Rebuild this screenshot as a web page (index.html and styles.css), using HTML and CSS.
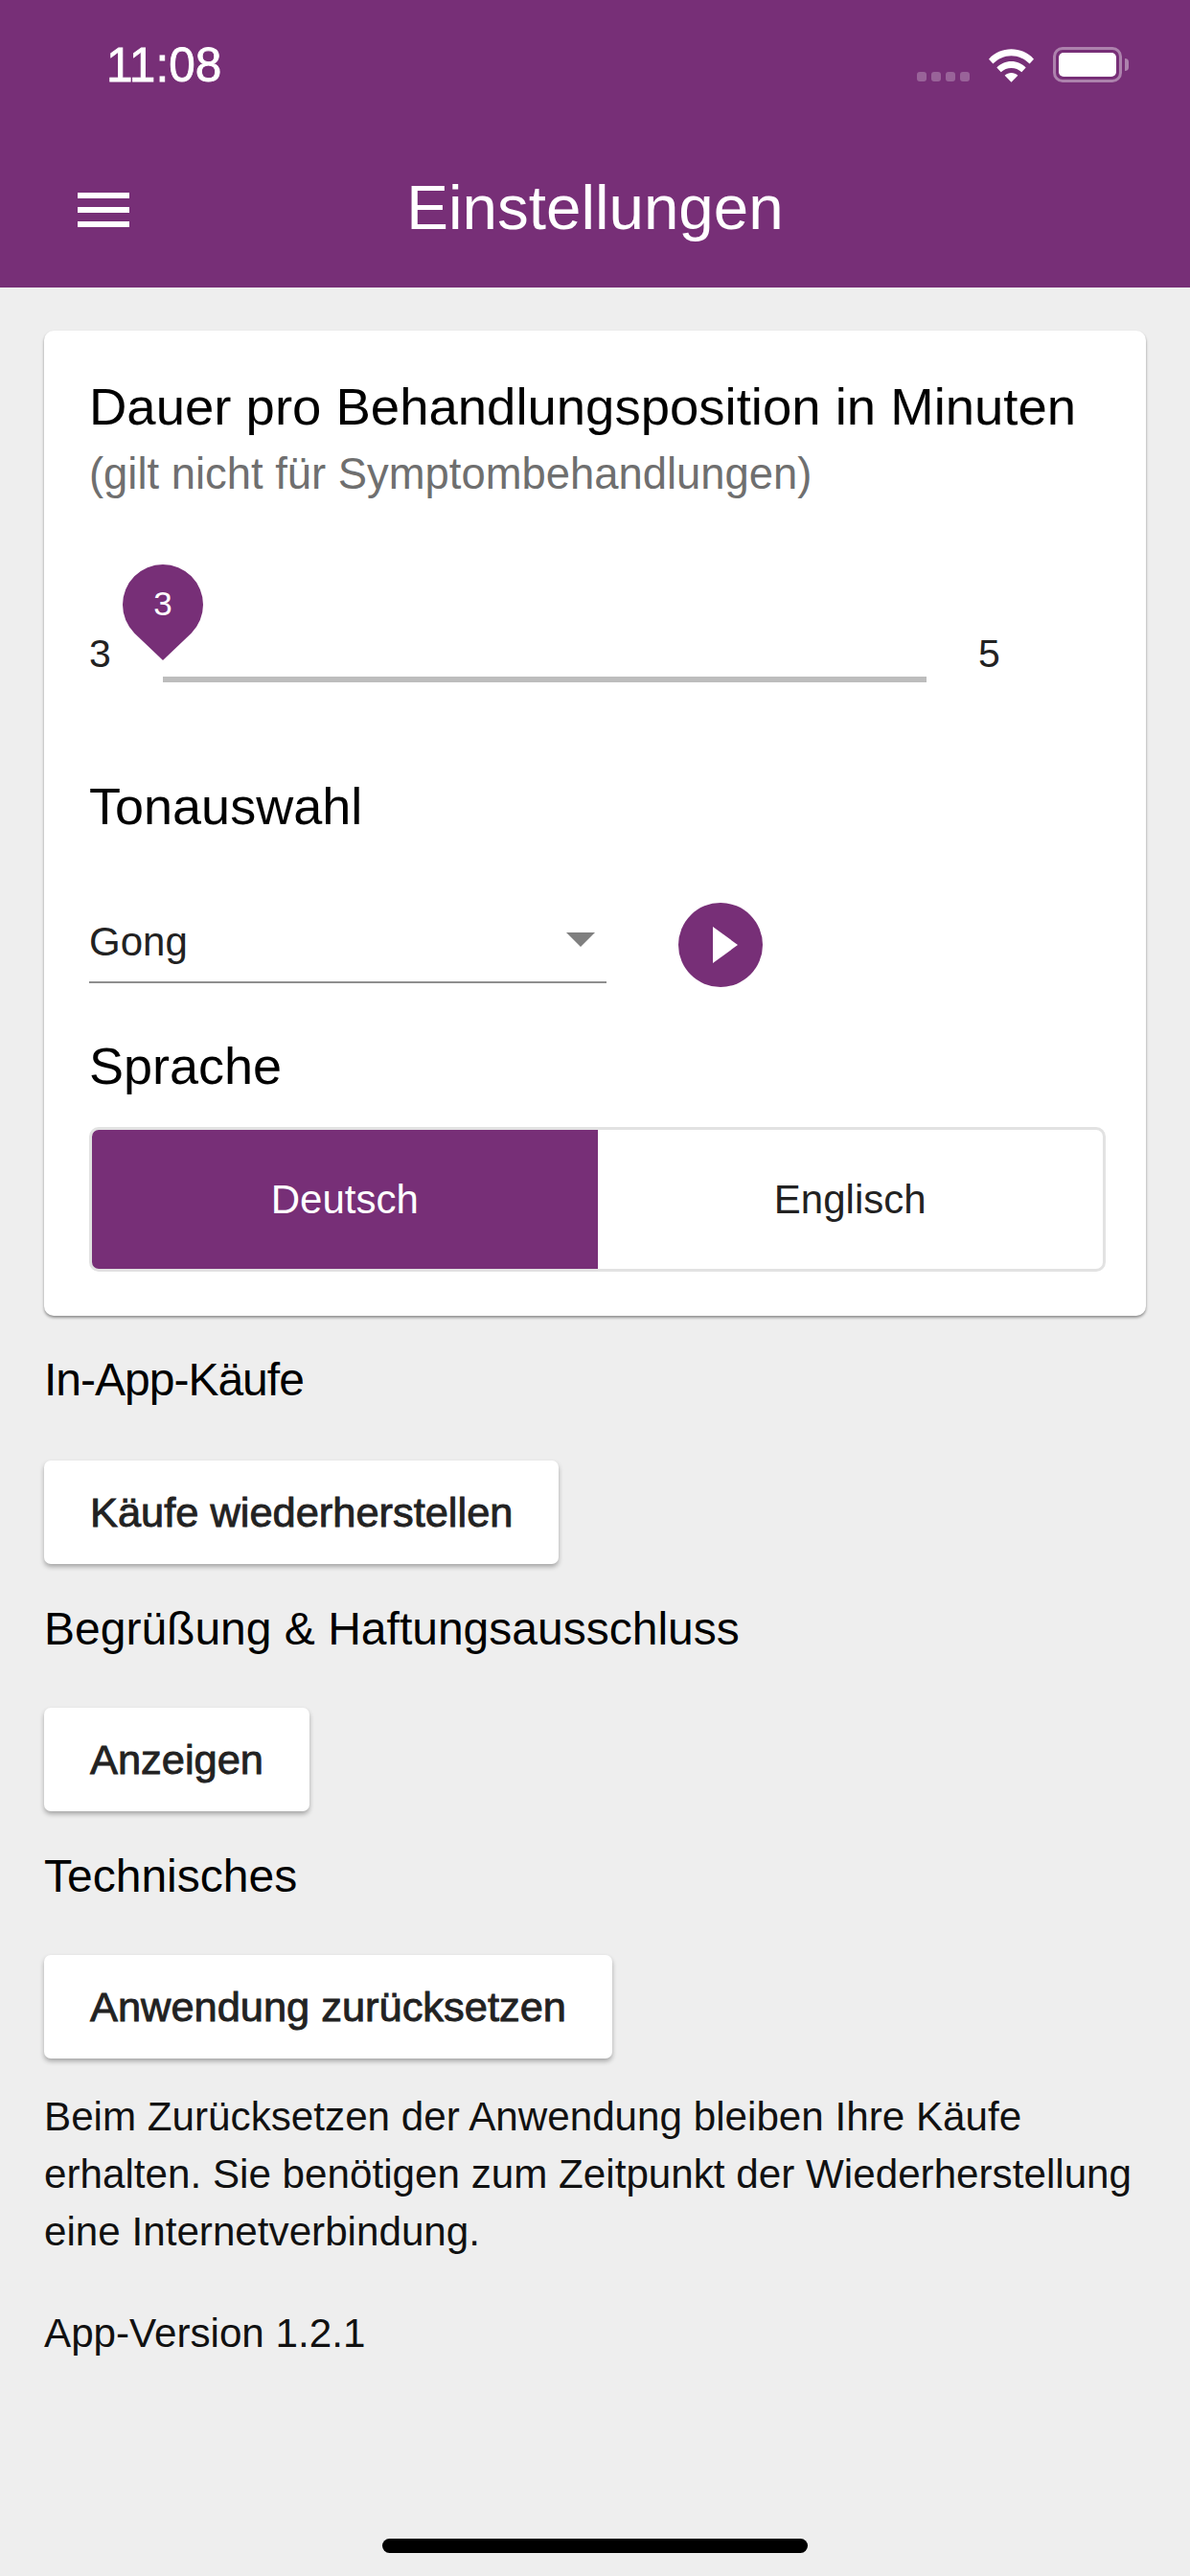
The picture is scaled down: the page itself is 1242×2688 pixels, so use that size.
FILE: index.html
```html
<!DOCTYPE html>
<html lang="de">
<head>
    <meta charset="UTF-8">
    <meta name="viewport" content="width=device-width, initial-scale=1.0">
    <title>Einstellungen</title>
    <link rel="stylesheet" href="styles.css">
</head>
<body>

    <header class="app-header">
        <div class="status-bar">
            <span class="status-time">11:08</span>
            <div class="status-icons">
                <div class="signal-dots"><i></i><i></i><i></i><i></i></div>
                <svg class="wifi-icon" width="47" height="36" viewBox="0 0 48 36">
                    <path fill="#fff" d="M0 11.500C6.500 4.500 15 1 24 1s17.500 3.500 24 10.500l-4.500 5C38 11 31.500 8 24 8S10 11 4.500 16.500z"/>
                    <path fill="#fff" d="M8.500 20.500C12.500 16.500 18 14 24 14s11.500 2.500 15.500 6.500L35 25.500C32 22.500 28 21 24 21s-8 1.500-11 4.500z"/>
                    <path fill="#fff" d="M17 29c2-1.800 4.500-2.800 7-2.800s5 1 7 2.800l-7 7z"/>
                </svg>
                <div class="battery">
                    <div class="battery-body"><div class="battery-level"></div></div>
                    <div class="battery-cap"></div>
                </div>
            </div>
        </div>
        <div class="toolbar">
            <button class="menu-button" aria-label="Menü"><i></i><i></i><i></i></button>
            <h1>Einstellungen</h1>
        </div>
    </header>

    <main class="content">
        <section class="card">
            <h2 class="card-title">Dauer pro Behandlungsposition in Minuten</h2>
            <p class="card-note">(gilt nicht für Symptombehandlungen)</p>

            <div class="slider">
                <span class="slider-label">3</span>
                <div class="slider-track">
                    <div class="slider-pin">
                        <svg width="84" height="100" viewBox="0 0 84 100">
                            <path fill="#772f77" d="M42 100 12.300 71.700A42 42 0 1 1 71.700 71.700z"/>
                        </svg>
                        <span>3</span>
                    </div>
                </div>
                <span class="slider-label">5</span>
            </div>

            <h2 class="section-title">Tonauswahl</h2>
            <div class="sound-row">
                <div class="select">
                    <span>Gong</span>
                    <i class="select-arrow"></i>
                </div>
                <button class="play-button" aria-label="Abspielen"><i></i></button>
            </div>

            <h2 class="section-title language-title">Sprache</h2>
            <div class="segment">
                <div class="segment-item active">Deutsch</div>
                <div class="segment-item">Englisch</div>
            </div>
        </section>

        <p class="label label-tight">In-App-Käufe</p>
        <button class="raised-button">Käufe wiederherstellen</button>

        <p class="label">Begrüßung &amp; Haftungsausschluss</p>
        <button class="raised-button">Anzeigen</button>

        <p class="label">Technisches</p>
        <button class="raised-button">Anwendung zurücksetzen</button>

        <p class="hint">Beim Zurücksetzen der Anwendung bleiben Ihre Käufe erhalten. Sie benötigen zum Zeitpunkt der Wiederherstellung eine Internetverbindung.</p>
        <p class="version">App-Version 1.2.1</p>
    </main>

    <div class="home-bar"></div>

</body>
</html>
```

FILE: styles.css
```css
* {
    box-sizing: border-box;
}

body {
    margin: 0;
    height: 2688px;
    position: relative;
    overflow: hidden;
    background-color: #eeeeee;
    color: #000;
    font-family: "Liberation Sans", Arial, sans-serif;
}

h1, h2, p {
    margin: 0;
    font-weight: 400;
}

button {
    font-family: inherit;
    border: none;
    padding: 0;
}

/* header */
.app-header {
    height: 300px;
    background-color: #772f77;
    color: #fff;
}

.status-bar {
    height: 130px;
    padding: 44px 64px 0 111px;
    display: flex;
    justify-content: space-between;
    align-items: flex-start;
}

.status-time {
    font-size: 49.5px;
    line-height: 48px;
    -webkit-text-stroke: 0.8px #fff;
}

.status-icons {
    display: flex;
    align-items: flex-end;
    gap: 20px;
    margin-top: 5px;
}

.signal-dots {
    display: flex;
    gap: 5px;
    margin-bottom: 1px;
}

.signal-dots i {
    width: 10px;
    height: 10px;
    border-radius: 3px;
    background-color: rgba(255, 255, 255, 0.25);
}

.wifi-icon {
    display: block;
}

.battery {
    display: flex;
    align-items: center;
    gap: 3px;
}

.battery-body {
    width: 72px;
    height: 37px;
    border: 3px solid rgba(255, 255, 255, 0.4);
    border-radius: 10px;
    padding: 3px;
}

.battery-level {
    height: 100%;
    border-radius: 5px;
    background-color: #fff;
}

.battery-cap {
    width: 4px;
    height: 13px;
    border-radius: 0 4px 4px 0;
    background-color: rgba(255, 255, 255, 0.4);
}

.toolbar {
    height: 170px;
    padding-top: 4px;
    position: relative;
    display: flex;
    align-items: center;
    justify-content: center;
}

.toolbar h1 {
    font-size: 65.5px;
    line-height: 74px;
}

.menu-button {
    position: absolute;
    left: 81px;
    top: 71px;
    width: 54px;
    display: flex;
    flex-direction: column;
    gap: 9px;
    background: none;
}

.menu-button i {
    display: block;
    height: 6px;
    background-color: #fff;
}

/* main */
.content {
    padding: 45px 46px 0;
}

.card {
    width: 1150px;
    height: 1028px;
    padding: 50px 42px 0 47px;
    background-color: #fff;
    border-radius: 10px;
    box-shadow: 0 2px 3px rgba(0, 0, 0, 0.4);
}

.card-title {
    font-size: 54.5px;
    line-height: 60px;
}

.card-note {
    margin-top: 14px;
    font-size: 45.4px;
    line-height: 52px;
    color: #6f6f6f;
}

.slider {
    display: flex;
    align-items: flex-start;
    margin-top: 138px;
    height: 90px;
}

.slider-label {
    font-size: 41px;
    line-height: 46px;
    width: 77px;
    color: #222;
}

.slider-track {
    width: 797px;
    height: 6px;
    margin-top: 47px;
    background-color: #bdbdbd;
    position: relative;
}

.slider-track + .slider-label {
    margin-left: 54px;
}

.slider-pin {
    position: absolute;
    left: -42px;
    top: -117px;
    width: 84px;
    height: 100px;
}

.slider-pin svg {
    display: block;
}

.slider-pin span {
    position: absolute;
    left: 0;
    right: 0;
    top: 20px;
    text-align: center;
    color: #fff;
    font-size: 35px;
    line-height: 42px;
}

.section-title {
    font-size: 54px;
    line-height: 60px;
}

.card > .slider + .section-title {
    margin-top: 62px;
}

.sound-row {
    display: flex;
    align-items: flex-start;
    margin-top: 71px;
}

.select {
    width: 540px;
    height: 84px;
    display: flex;
    justify-content: space-between;
    align-items: center;
    border-bottom: 2px solid #8f8f8f;
    font-size: 42px;
    color: #222;
    padding-right: 12px;
}

.select-arrow {
    width: 0;
    height: 0;
    border-left: 15px solid transparent;
    border-right: 15px solid transparent;
    border-top: 15px solid #7f7f7f;
    margin-bottom: 6px;
}

.play-button {
    width: 88px;
    height: 88px;
    margin-left: 75px;
    border-radius: 50%;
    background-color: #772f77;
    display: flex;
    align-items: center;
    justify-content: center;
    padding-left: 10px;
}

.play-button i {
    width: 0;
    height: 0;
    border-top: 19px solid transparent;
    border-bottom: 19px solid transparent;
    border-left: 26px solid #fff;
}

.language-title {
    margin-top: 52px;
}

.segment {
    width: 1061px;
    height: 151px;
    margin-top: 34px;
    display: flex;
    border: 3px solid #e2e2e2;
    border-radius: 10px;
    overflow: hidden;
}

.segment-item {
    flex: 1;
    display: flex;
    align-items: center;
    justify-content: center;
    font-size: 42px;
    color: #222;
}

.segment-item.active {
    background-color: #772f77;
    color: #fff;
}

.label {
    font-size: 48px;
    line-height: 52px;
    margin-top: 41px;
}

.label-tight {
    letter-spacing: -1px;
}

.raised-button {
    display: block;
    height: 108px;
    padding: 0 48px;
    margin-top: 56px;
    background-color: #fff;
    border-radius: 7px;
    font-size: 43.4px;
    font-weight: 400;
    -webkit-text-stroke: 0.9px #222;
    color: #222;
    box-shadow: 0 3px 5px rgba(0, 0, 0, 0.3);
}

.label-tight + .raised-button {
    margin-top: 58px;
}

.raised-button + .label {
    margin-top: 42px;
}

.hint {
    margin-top: 31px;
    width: 1150px;
    font-size: 42.2px;
    line-height: 60px;
    color: #111;
}

.version {
    margin-top: 46px;
    font-size: 42.2px;
    line-height: 60px;
    color: #111;
}

.home-bar {
    position: absolute;
    left: 399px;
    bottom: 24px;
    width: 444px;
    height: 15px;
    border-radius: 8px;
    background-color: #000;
}
```
